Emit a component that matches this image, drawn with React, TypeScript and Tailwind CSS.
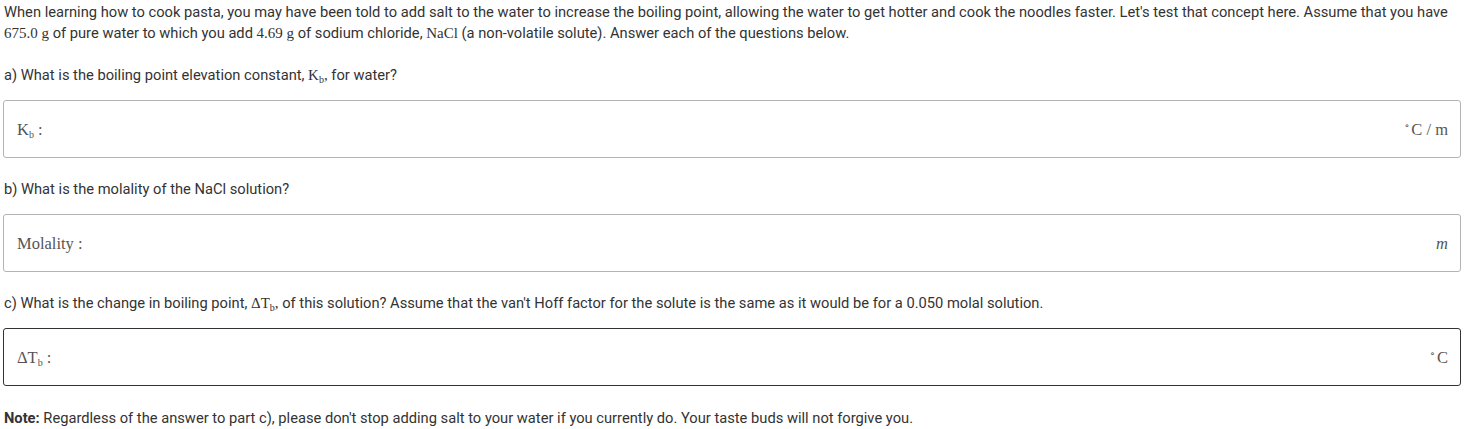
import React from 'react';

const serif = { fontFamily: '"Liberation Serif", "DejaVu Serif", serif' };

function M({ children }: { children: React.ReactNode }) {
  return (
    <span className="text-[15px]" style={serif}>
      {children}
    </span>
  );
}

function Sub({ children }: { children: React.ReactNode }) {
  return <span className="text-[10px] align-[-3px] leading-none">{children}</span>;
}

function Deg() {
  return <span className="text-[10px] align-[6px] leading-none mr-[2px]">∘</span>;
}

function AnswerBox({
  label,
  unit,
  active,
}: {
  label: React.ReactNode;
  unit: React.ReactNode;
  active?: boolean;
}) {
  return (
    <div
      className={`mx-[3px] h-[58px] rounded-[3px] border flex items-center justify-between pl-[13px] pr-3 bg-white ${
        active ? 'border-[#333]' : 'border-[#b3b3b3]'
      }`}
    >
      <span className="text-[16.5px] text-[#555]" style={serif}>
        {label}
      </span>
      <span className="text-[16.5px] text-[#555]" style={serif}>
        {unit}
      </span>
    </div>
  );
}

export default function App() {
  return (
    <div
      className="w-[1464px] h-[429px] bg-white text-[#333] text-[14.7px] leading-[21px] pt-[2px]"
      style={{ fontFamily: 'Roboto, "Liberation Sans", sans-serif' }}
    >
      <p className="px-[4px]">
        When learning how to cook pasta, you may have been told to add salt to the water to increase the boiling point,
        allowing the water to get hotter and cook the noodles faster. Let's test that concept here. Assume that you have{' '}
        <M>675.0 g</M> of pure water to which you add <M>4.69 g</M> of sodium chloride, <M>NaCl</M> (a non-volatile
        solute). Answer each of the questions below.
      </p>

      <p className="px-[4px] mt-[21px] mb-[14px]">
        a) What is the boiling point elevation constant,{' '}
        <M>
          K<Sub>b</Sub>,
        </M>{' '}
        for water?
      </p>
      <AnswerBox
        label={
          <>
            K<Sub>b</Sub> :
          </>
        }
        unit={
          <>
            <Deg />C / m
          </>
        }
      />

      <p className="px-[4px] mt-[21px] mb-[14px]">b) What is the molality of the NaCl solution?</p>
      <AnswerBox label="Molality :" unit={<i>m</i>} />

      <p className="px-[4px] mt-[21px] mb-[14px]">
        c) What is the change in boiling point,{' '}
        <M>
          ΔT<Sub>b</Sub>,
        </M>{' '}
        of this solution? Assume that the van't Hoff factor for the solute is the same as it would be for a 0.050
        molal solution.
      </p>
      <AnswerBox
        active
        label={
          <>
            ΔT<Sub>b</Sub> :
          </>
        }
        unit={
          <>
            <Deg />C
          </>
        }
      />

      <p className="px-[4px] mt-[22px]">
        <b className="font-bold">Note:</b> Regardless of the answer to part c), please don't stop adding salt to your
        water if you currently do. Your taste buds will not forgive you.
      </p>
    </div>
  );
}
